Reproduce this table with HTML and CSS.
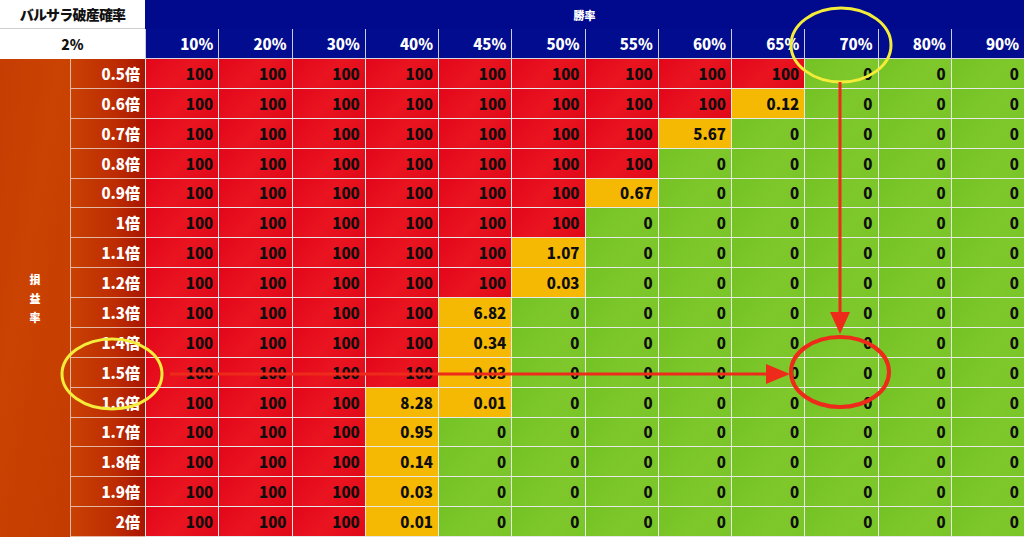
FILE: index.html
```html
<!DOCTYPE html>
<html lang="ja">
<head>
<meta charset="utf-8">
<link rel="stylesheet" href="styles.css">
</head>
<body>
<div class="wrap">
  <div class="table" id="table">
    <div class="corner title">バルサラ破産確率</div>
    <div class="head-top">勝率</div>
    <div class="corner rate">2%</div>
  </div>
  <svg class="marks" width="1024" height="537" viewBox="0 0 1024 537">
    <ellipse cx="841" cy="45" rx="50" ry="37" fill="none" stroke="#f4ec3a" stroke-width="3"/>
    <ellipse cx="112" cy="374" rx="50" ry="35" fill="none" stroke="#f4ec3a" stroke-width="3"/>
    <ellipse cx="840" cy="372" rx="49" ry="35" fill="none" stroke="#ee2a1a" stroke-width="4"/>
    <line x1="840" y1="82" x2="840" y2="314" stroke="#ee2a1a" stroke-width="3"/>
    <polygon points="830,312 850,312 840,334" fill="#ee2a1a"/>
    <line x1="170" y1="374" x2="768" y2="374" stroke="#ee2a1a" stroke-width="3"/>
    <polygon points="766,364 766,384 790,374" fill="#ee2a1a"/>
  </svg>
</div>
<script>
  const cols = [10,20,30,40,45,50,55,60,65,70,80,90];
  const rows = [
    ["0.5倍", ["100","100","100","100","100","100","100","100","100","0","0","0"]],
    ["0.6倍", ["100","100","100","100","100","100","100","100","0.12","0","0","0"]],
    ["0.7倍", ["100","100","100","100","100","100","100","5.67","0","0","0","0"]],
    ["0.8倍", ["100","100","100","100","100","100","100","0","0","0","0","0"]],
    ["0.9倍", ["100","100","100","100","100","100","0.67","0","0","0","0","0"]],
    ["1倍", ["100","100","100","100","100","100","0","0","0","0","0","0"]],
    ["1.1倍", ["100","100","100","100","100","1.07","0","0","0","0","0","0"]],
    ["1.2倍", ["100","100","100","100","100","0.03","0","0","0","0","0","0"]],
    ["1.3倍", ["100","100","100","100","6.82","0","0","0","0","0","0","0"]],
    ["1.4倍", ["100","100","100","100","0.34","0","0","0","0","0","0","0"]],
    ["1.5倍", ["100","100","100","100","0.03","0","0","0","0","0","0","0"]],
    ["1.6倍", ["100","100","100","8.28","0.01","0","0","0","0","0","0","0"]],
    ["1.7倍", ["100","100","100","0.95","0","0","0","0","0","0","0","0"]],
    ["1.8倍", ["100","100","100","0.14","0","0","0","0","0","0","0","0"]],
    ["1.9倍", ["100","100","100","0.03","0","0","0","0","0","0","0","0"]],
    ["2倍", ["100","100","100","0.01","0","0","0","0","0","0","0","0"]]
  ];
  const t = document.getElementById('table');
  cols.forEach(c => {
    const d = document.createElement('div');
    d.className = 'head';
    d.textContent = c + '%';
    t.appendChild(d);
  });
  const side = document.createElement('div');
  side.className = 'side';
  side.innerHTML = '<span>損</span><span>益</span><span>率</span>';
  t.appendChild(side);
  rows.forEach(([label, vals]) => {
    const l = document.createElement('div');
    l.className = 'label';
    l.textContent = label;
    t.appendChild(l);
    vals.forEach(v => {
      const d = document.createElement('div');
      d.className = 'cell ' + (v === '100' ? 'red' : v === '0' ? 'green' : 'yellow');
      d.textContent = v;
      t.appendChild(d);
    });
  });
</script>
</body>
</html>
```
FILE: styles.css
```css
html, body {
  margin: 0;
  padding: 0;
  background: #ffffff;
  overflow: hidden;
}
.wrap {
  position: relative;
  width: 1024px;
  height: 537px;
}
.table {
  display: grid;
  grid-template-columns: 71px 74px repeat(12, 1fr);
  grid-template-rows: 29px 30px repeat(16, 1fr);
  width: 1024px;
  height: 537px;
  font-family: "Noto Sans CJK JP", "Noto Sans", sans-serif;
  font-weight: 900;
}
.table > div {
  box-sizing: border-box;
  display: flex;
  align-items: center;
}
.corner {
  grid-column: 1 / 3;
  background: #ffffff;
  color: #111111;
  justify-content: center;
  font-size: 14px;
}
.corner.title {
  grid-row: 1;
  border-bottom: 1px solid #cfcfcf;
  letter-spacing: -0.8px;
}
.corner.rate {
  grid-row: 2;
  font-size: 14px;
}
.head-top {
  grid-column: 3 / 15;
  grid-row: 1;
  background: #010a8c;
  color: #ffffff;
  justify-content: center;
  font-size: 11px;
}
.head {
  grid-row: 2;
  background: #020c8e;
  color: #ffffff;
  justify-content: flex-end;
  padding-right: 5px;
  font-size: 15px;
  border-left: 1px solid #c9cbe0;
  border-bottom: 1px solid #d6d6e6;
}
.side {
  grid-column: 1;
  grid-row: 3 / 19;
  background: linear-gradient(100deg, #c53d02 0%, #cb4302 40%, #c33b00 100%);
  color: #ffffff;
  flex-direction: column;
  justify-content: center;
  font-size: 11px;
  line-height: 19px;
  border-right: 1px solid #e7b9a0;
}
.side span {
  display: block;
}
.label {
  grid-column: 2;
  background: linear-gradient(90deg, #c94104 0%, #bd2c02 60%, #a81400 100%);
  color: #ffffff;
  justify-content: flex-end;
  padding-right: 5px;
  font-size: 15px;
  border-bottom: 1px solid #e4b6a4;
}
.cell {
  justify-content: flex-end;
  padding-right: 5px;
  font-size: 15px;
  color: #0e0e0e;
  border-left: 1px solid #e8e8e8;
  border-bottom: 1px solid #e8e8e8;
}
.red {
  background: linear-gradient(135deg, #e2061a 0%, #ea1420 50%, #e00818 100%);
}
.yellow {
  background: #f5b903;
}
.green {
  background: linear-gradient(135deg, #74c224 0%, #7fc82c 60%, #79c528 100%);
}
.marks {
  position: absolute;
  left: 0;
  top: 0;
  pointer-events: none;
}
```
